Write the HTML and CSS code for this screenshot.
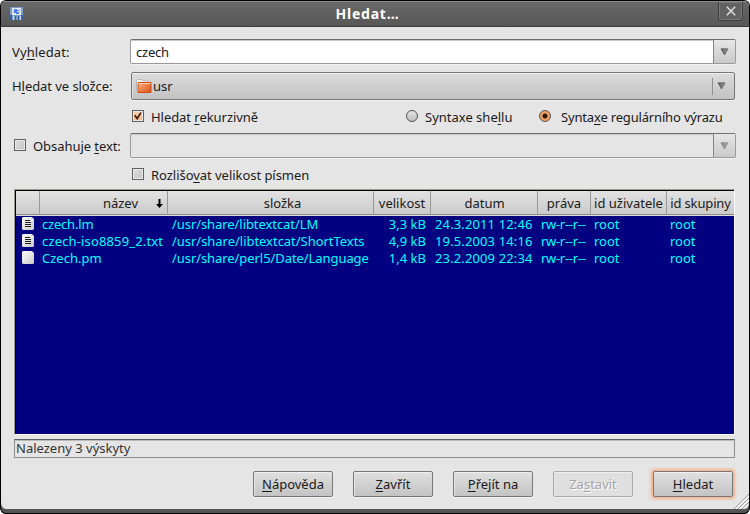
FILE: index.html
```html
<!DOCTYPE html>
<html lang="cs">
<head>
<meta charset="utf-8">
<title>Hledat…</title>
<link rel="stylesheet" href="styles.css">
</head>
<body>
<div class="window">
  <header class="titlebar">
    <svg class="app-icon" viewBox="0 0 13 13" shape-rendering="crispEdges"><path fill="#7e9cc8" d="M0 0h13v13H0z"/><path fill="#e4eaf5" d="M2 1h9v7H2z"/><path fill="#4a7de8" d="M4 2h3v1h2v1H7v1h2v2H6V6H4z"/><path fill="#a9c4f4" d="M3 4h1v2H3zM9 2h1v3H9z"/><path fill="#35659f" d="M0 8h2v5H0zM11 8h2v5h-2zM5 9h1v4H5zM8 9h1v4H8z"/><path fill="#d3dce8" d="M3 9h1v4H3zM10 9h1v4h-1z"/></svg>
    <h1>Hledat…</h1>
    <button class="close" aria-label="Zavřít"><svg viewBox="0 0 10 10"><path d="M.8.8l8.4 8.4M9.2.8L.8 9.2" stroke="#ddd" stroke-width="1.5"/></svg></button>
  </header>
  <main>
    <div class="row first">
      <label class="t-vyh">Vy<u>h</u>ledat:</label>
      <div class="entry"><span class="t-czech">czech</span><i class="drop"><svg viewBox="0 0 9 8"><use href="#tri"/></svg></i></div>
    </div>
    <div class="row second">
      <label class="t-slozce">H<u>l</u>edat ve složce:</label>
      <div class="combo">
        <svg class="folder" viewBox="0 0 17 15"><path d="M1.500 12.500V1.500l1-1h4l1 1.500h6V5" fill="#fff" stroke="#aaa" stroke-width=".8"/><path d="M3 3.500h13v10H3z" fill="url(#orange)" stroke="#cb4c17"/><path d="M3.500 4.500h12" stroke="#f9cfae"/></svg>
        <span class="t-usr">usr</span><i class="sep"></i><svg class="tri" viewBox="0 0 9 8"><use href="#tri"/></svg>
      </div>
    </div>
    <div class="row options">
      <span class="check on"><svg viewBox="0 0 12 12"><path d="M2 5l3 4 4.500-7" fill="none" stroke="#371b0b" stroke-width="2"/></svg></span>
      <label class="t-rek">Hledat <u>r</u>ekurzivně</label>
      <span class="radio"></span><label class="t-shell">Syntaxe she<u>l</u>lu</label>
      <span class="radio on"></span><label class="t-reg">Synta<u>x</u>e regulárního výrazu</label>
    </div>
    <div class="row contains">
      <span class="check"></span><label class="t-obs">Obsahuje <u>t</u>ext:</label>
      <div class="entry disabled"><i class="drop"><svg viewBox="0 0 9 8"><use href="#tri"/></svg></i></div>
    </div>
    <div class="row case"><span class="check"></span><label class="t-case">Rozlišo<u>v</u>at velikost písmen</label></div>

    <div class="list">
      <div class="grid head">
        <span></span><span class="t-nazev">název<svg class="sort" viewBox="0 0 7 9"><path d="M2.500 0h2v5H7L3.500 9 0 5h2.500z"/></svg></span><span class="t-slozka">složka</span><span class="t-vel">velikost</span><span class="t-datum">datum</span><span class="t-prava">práva</span><span class="t-uid">id uživatele</span><span class="t-gid">id skupiny</span>
      </div>
      <div class="grid item">
        <svg class="file" viewBox="0 0 12 13"><use href="#doc"/><use href="#lines"/></svg><span class="n1">czech.lm</span><span class="p1">/usr/share/libtextcat/LM</span><span class="size">3,3 kB</span><span class="date">24.3.2011 12:46</span><span class="perm">rw-r--r--</span><span class="root">root</span><span class="root">root</span>
      </div>
      <div class="grid item">
        <svg class="file" viewBox="0 0 12 13"><use href="#doc"/><use href="#lines"/></svg><span class="n2">czech-iso8859_2.txt</span><span class="p2">/usr/share/libtextcat/ShortTexts</span><span class="size">4,9 kB</span><span class="date">19.5.2003 14:16</span><span class="perm">rw-r--r--</span><span class="root">root</span><span class="root">root</span>
      </div>
      <div class="grid item">
        <svg class="file" viewBox="0 0 12 13"><use href="#doc"/></svg><span class="n3">Czech.pm</span><span class="p3">/usr/share/perl5/Date/Language</span><span class="size">1,4 kB</span><span class="date">23.2.2009 22:34</span><span class="perm">rw-r--r--</span><span class="root">root</span><span class="root">root</span>
      </div>
    </div>
    <div class="status"><span class="t-status">Nalezeny 3 výskyty</span></div>
    <div class="buttons">
      <button class="b-nap"><span><u>N</u>ápověda</span></button>
      <button class="b-zav"><span><u>Z</u>avřít</span></button>
      <button class="b-pre"><span><u>P</u>řejít na</span></button>
      <button class="b-zas" disabled><span>Za<u>s</u>tavit</span></button>
      <button class="b-hle default"><span><u>H</u>ledat</span></button>
    </div>
  </main>
  <svg class="grip" viewBox="0 0 15 15"><path d="M0 15L15 0M4 15L15 4M8 15l7-7M12 15l3-3" stroke="#9a9a9a"/><path d="M1.500 15L15 1.500M5.500 15L15 5.500M9.500 15l5.500-5.500" stroke="#fff"/></svg>
</div>
<svg width="0" height="0" class="defs"><defs>
  <linearGradient id="orange" x2="1" y2="1"><stop stop-color="#f6b880"/><stop offset="1" stop-color="#dc4f16"/></linearGradient>
  <linearGradient id="trig" x2="1" y2="0"><stop stop-color="#555"/><stop offset="1" stop-color="#a0a0a0"/></linearGradient>
  <linearGradient id="paper" x2="1" y2="1"><stop stop-color="#fff"/><stop offset="1" stop-color="#c8c8c8"/></linearGradient>
  <path id="tri" d="M1 .800h7L4.500 7z" fill="url(#trig)" stroke="#555" stroke-width=".7"/>
  <path id="doc" d="M0 1l1-1h9l2 2v10l-1 1H1l-1-1z" fill="url(#paper)"/>
  <path id="lines" d="M3 3.500h5M3 5.500h6M3 7.500h6M3 9.500h6" stroke="#222"/>
</defs></svg>
</body>
</html>
```
FILE: styles.css
```css
* { box-sizing: border-box; }
body { margin: 0; background: #fff; color: #1a1a1a; font: 13px/18px "Noto Sans", "Open Sans", sans-serif; overflow: hidden; white-space: nowrap; }
button { font: inherit; padding: 0; color: inherit; }
svg { display: block; flex: none; }
.defs { position: absolute; }
u { text-decoration: underline; text-decoration-thickness: 1px; text-underline-offset: 2px; text-decoration-skip-ink: none; }
.window { position: relative; width: 750px; height: 514px; background: #e5e5e5; border: 1px solid #000; border-bottom: 0; border-radius: 6px; overflow: hidden; box-shadow: inset 0 -1px #000, inset 0 -5px #555; }
.titlebar { height: 26px; border-top: 1px solid #8a8a8a; border-bottom: 1px solid #3b3b3b; background: linear-gradient(#696969, #575757); display: grid; grid-template-columns: 40px 1fr 40px; }
.app-icon { width: 13px; height: 13px; margin: 5px 0 0 9px; }
h1 { margin: 0; font-size: 14px; line-height: 23px; font-weight: 700; color: #fff; text-align: center; letter-spacing: .75px; padding-right: 15px; }
.close { width: 25px; height: 19px; margin-left: 9px; border: 1px solid #3f3f3f; border-top: 0; border-radius: 0 0 3px 3px; background: #626262; box-shadow: inset 0 0 0 1px #777; display: grid; place-items: center; }
.close svg { width: 10px; height: 10px; }
.row { display: flex; align-items: center; }
.first { margin: 12px 13px 0 11px; height: 25px; }
.second { margin: 8px 14px 0 11px; height: 28px; }
.first label, .second label { width: 118px; flex: none; }
.t-vyh { letter-spacing: .1px; }
.t-slozce { letter-spacing: -.06px; }
.t-czech { letter-spacing: -.2px; }
.entry { flex: 1; height: 25px; display: flex; align-items: center; background: #fff; border: 1px solid #9a9a9a; border-top-color: #707070; border-radius: 2px; padding-left: 5px; box-shadow: inset 0 1px #c8c8c8, 0 1px #f2f2f2; }
.drop { margin-left: auto; width: 22px; height: 23px; border-left: 1px solid #858585; background: linear-gradient(#e6e6e6, #c9c9c9); display: grid; place-items: center; }
.drop svg, .tri { width: 9px; height: 8px; }
.combo { flex: 1; margin-left: 1px; height: 28px; display: flex; align-items: center; border: 1px solid #777; border-radius: 2px; padding: 0 8px 0 3px; background: linear-gradient(#dcdcdc, #c2c2c2); box-shadow: inset 0 1px #efefef, inset 1px 0 #ddd, 0 1px #f2f2f2; }
.folder { width: 17px; height: 15px; margin-right: 1px; }
.sep { width: 1px; height: 17px; background: #909090; margin-left: auto; margin-right: 4px; }
.options { margin: 6px 0 0 131px; height: 21px; }
.options label { margin-left: 7px; flex: none; width: 255px; letter-spacing: -.05px; }
.options .t-shell { width: 114px; letter-spacing: 0; }
.options .t-reg { margin-left: 10px; letter-spacing: -.17px; }
.check { flex: none; width: 12px; height: 12px; border: 1px solid #626262; background: linear-gradient(135deg, #dedede, #c4c4c4); box-shadow: inset 0 0 0 1px #e8e8e8; position: relative; top: -1px; }
.check.on { background: linear-gradient(#f8d1b4, #f6b283); }
.check svg { width: 10px; height: 10px; }
.radio { flex: none; width: 12px; height: 12px; border: 1px solid #555; border-radius: 50%; background: linear-gradient(#e5e5e5, #bdbdbd); position: relative; top: -1px; }
.radio.on { background: radial-gradient(circle, #34190a 0 2px, #f1a065 3px 5px); }
.contains { margin: 4px 13px 0 13px; height: 29px; }
.contains label { margin-left: 7px; width: 97px; flex: none; letter-spacing: -.06px; }
.entry.disabled { background: #e5e5e5; }
.disabled svg { opacity: .65; }
.case { margin: 4px 0 0 131px; height: 22px; }
.case label { margin-left: 7px; letter-spacing: -.04px; }
.list { margin: 3px 14px 0 13px; height: 246px; background: #000080; border: 1px solid #9a9a95; border-right-color: #fff; border-bottom-color: #fff; box-shadow: inset 1px 1px #000; padding: 1px 0 0 1px; }
.grid { display: grid; grid-template-columns: 24px 128px 206px 57px 107px 53px 76px 1fr; }
.head { height: 24px; margin-bottom: 1px; line-height: 24px; text-align: center; background: linear-gradient(#e2e2e2, #cbcbcb); border-bottom: 1px solid #8c8c8c; box-shadow: 0 1px #ddd; }
.head > span { border-right: 1px solid #999; }
.head > span:last-child { border: 0; }
.head .t-nazev { display: flex; justify-content: flex-end; align-items: center; gap: 18px; padding-right: 4px; }
.head .t-slozka { padding-left: 24px; }
.head .t-datum { padding-left: 1px; }
.head .t-gid { letter-spacing: -.15px; }
.sort { width: 7px; height: 9px; }
.item { height: 17px; line-height: 17px; color: #00ffff; }
.item > span { padding-left: 2px; }
.item > .n1 { letter-spacing: -.2px; }
.item > .n2 { letter-spacing: .15px; }
.item > .p1, .item > .p2, .item > .p3 { padding-left: 4px; letter-spacing: -.07px; }
.item > .p2 { letter-spacing: -.03px; }
.item > .size { text-align: right; padding: 0 5px 0 0; }
.item > .date, .item > .perm, .item > .root { padding-left: 4px; }
.item > .date { letter-spacing: .13px; }
.item > .perm { letter-spacing: -.3px; padding-left: 3px; }
.item > .root { padding-left: 3px; }
.file { width: 12px; height: 13px; margin: 1px 0 0 6px; }
.status { margin: 4px 14px 0 13px; height: 19px; line-height: 17px; border: 1px solid #8e8e8e; border-top-color: #606060; color: #333; padding-left: 1px; box-shadow: inset 0 1px #bbb; }
.buttons { margin: 13px 16px 0; display: flex; justify-content: flex-end; gap: 20px; }
.buttons button { width: 80px; height: 26px; border: 1px solid #777; border-radius: 2px; background: linear-gradient(#e0e0e0, #c3c3c3); box-shadow: inset 0 1px #f0f0f0, inset 1px 0 #e6e6e6, 0 1px #f0f0f0; }
.buttons button:disabled { border-color: #aaa; background: #dfdfdf; color: #a5a5a5; text-shadow: 1px 1px #fff; }
.buttons .default { box-shadow: 0 0 3px 2px #f3b08a, inset 0 1px #f0f0f0; }
.grip { position: absolute; right: 0; bottom: 5px; width: 15px; height: 15px; }
```
